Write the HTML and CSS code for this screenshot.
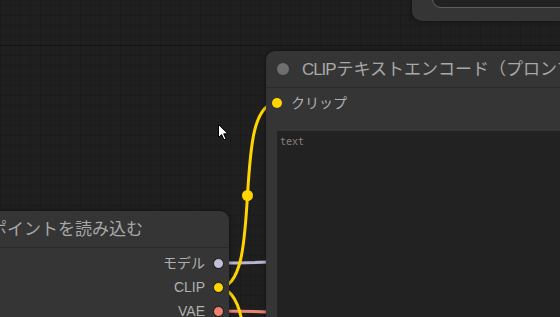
FILE: index.html
```html
<!DOCTYPE html>
<html lang="ja">
<head>
<meta charset="utf-8">
<link rel="stylesheet" href="styles.css">
</head>
<body>
<div class="canvas">
  <svg class="links" width="560" height="317" viewBox="0 0 560 317">
    <path class="link model" d="M218,263 C330,263 520,245 760,215"/>
    <path class="link vae" d="M218,311 C330,311 560,330 820,360"/>
    <path class="link clip" d="M218,288 C266,288 229,103 277,103"/>
    <path class="link clip" d="M218,288 C268,288 227,480 277,480"/>
    <circle class="link-dot" cx="247.5" cy="195.5" r="5.5"/>
  </svg>

  <div class="node node-top">
    <div class="combo"><span class="combo-text">v1-5-pruned-emaonly.safetensors</span></div>
  </div>

  <div class="node node-clip">
    <div class="node-title">
      <span class="title-dot"></span>
      <span class="title-text"><span class="latin">CLIP</span>テキストエンコード（プロンプト）</span>
    </div>
    <div class="inputs">
      <div class="slot-row">
        <span class="slot slot-clip"></span>
        <span class="slot-label">クリップ</span>
      </div>
    </div>
    <div class="textarea">text</div>
  </div>

  <div class="node node-ckpt">
    <div class="node-title">
      <span class="title-text">チェックポイントを読み込む</span>
    </div>
    <div class="outputs">
      <div class="slot-row out">
        <span class="slot-label">モデル</span>
        <span class="slot slot-model"></span>
      </div>
      <div class="slot-row out">
        <span class="slot-label">CLIP</span>
        <span class="slot slot-clip"></span>
      </div>
      <div class="slot-row out">
        <span class="slot-label">VAE</span>
        <span class="slot slot-vae"></span>
      </div>
    </div>
  </div>

  <svg class="cursor" width="12" height="17" viewBox="0 0 12 17">
    <path d="M0.5,0.5 L0.5,13.5 L3.6,10.6 L6,15.8 L8,14.9 L5.7,9.8 L10,9.8 Z" fill="#ffffff" stroke="#000000" stroke-width="1" stroke-linejoin="round"/>
  </svg>
</div>
</body>
</html>
```

FILE: styles.css
```css
html, body {
  margin: 0;
  padding: 0;
  background: #1e1e1e;
}

.canvas {
  position: relative;
  width: 560px;
  height: 317px;
  overflow: hidden;
  background-color: #1f1f1f;
  background-image:
    linear-gradient(to bottom, rgba(0,0,0,0.3) 1px, transparent 1px),
    linear-gradient(to right, rgba(0,0,0,0.1) 1px, transparent 1px),
    linear-gradient(to bottom, rgba(0,0,0,0.1) 1px, transparent 1px);
  background-size: 560px 2px, 10px 10px, 10px 10px;
  background-repeat: no-repeat, repeat, repeat;
  background-position: 0 45px, 0 0, 0 5px;
  font-family: "Liberation Sans", "Noto Sans CJK JP", sans-serif;
}

.links {
  position: absolute;
  left: 0;
  top: 0;
}

.link {
  fill: none;
  stroke-width: 3;
  stroke-linecap: round;
}

.link.clip { stroke: #ffd500; }
.link.model { stroke: #b9b5d0; }
.link.vae { stroke: #e98672; }

.link-dot { fill: #ffd500; }

.node {
  position: absolute;
  background: #353535;
  box-shadow: 0 0 4px rgba(0,0,0,0.5);
}

.node-top {
  left: 412px;
  top: -20px;
  width: 200px;
  padding: 0 0 13px 20px;
  border-radius: 0 0 0 10px;
}

.combo {
  height: 26px;
  background: #222222;
  border: 1px solid #606060;
  border-radius: 0 0 0 9px;
  overflow: hidden;
  display: flex;
  align-items: flex-start;
}

.combo-text {
  margin: -10px 0 0 16px;
  font-size: 13px;
  color: #dddddd;
  white-space: nowrap;
  letter-spacing: 1px;
}

.node-clip {
  left: 266px;
  top: 51px;
  width: 340px;
  height: 300px;
  border-radius: 9px 9px 0 0;
  display: flex;
  flex-direction: column;
}

.node-title {
  height: 36px;
  flex: 0 0 36px;
  display: flex;
  align-items: center;
  border-bottom: 1px solid #2a2a2a;
  white-space: nowrap;
  overflow: hidden;
}

.node-clip .node-title {
  padding-left: 11px;
  gap: 13px;
}

.title-dot {
  width: 12px;
  height: 12px;
  border-radius: 50%;
  background: #6f6f6f;
  flex: 0 0 12px;
}

.title-text {
  font-size: 17px;
  color: #a8a8a8;
  line-height: 1;
}

.latin {
  letter-spacing: -1.1px;
  margin-right: 1px;
}

.inputs {
  display: flex;
  flex-direction: column;
  padding-top: 3px;
}

.slot-row {
  height: 24px;
  display: flex;
  align-items: center;
}

.inputs .slot-row {
  padding-left: 6px;
  gap: 9px;
}

.slot {
  width: 11px;
  height: 11px;
  border-radius: 50%;
  flex: 0 0 11px;
  box-sizing: border-box;
}

.slot-clip { background: #ffd500; border: 1.5px solid #151515; }
.slot-model { background: #c3bfd9; border: 1.5px solid #151515; }
.slot-vae { background: #ec8270; border: 1.5px solid #151515; }

.inputs .slot {
  width: 10px;
  height: 10px;
  flex-basis: 10px;
  border: none;
}

.slot-label {
  font-size: 14px;
  color: #b0b0b0;
  line-height: 1;
}

.textarea {
  margin: 16px 0 0 11px;
  flex: 1;
  background: #222222;
  font-family: "DejaVu Sans Mono", monospace;
  font-size: 10px;
  color: #8a8170;
  padding: 5px 3px;
}

.node-ckpt {
  left: -20px;
  top: 211px;
  width: 249px;
  height: 140px;
  border-radius: 0 9px 0 0;
  display: flex;
  flex-direction: column;
}

.node-ckpt .node-title {
  padding-left: 0;
  justify-content: flex-end;
  padding-right: 86px;
}

.outputs {
  display: flex;
  flex-direction: column;
  padding-top: 3px;
}

.slot-row.out {
  justify-content: flex-end;
  padding-right: 5px;
  gap: 8px;
}

.cursor {
  position: absolute;
  left: 218px;
  top: 124px;
}
```
